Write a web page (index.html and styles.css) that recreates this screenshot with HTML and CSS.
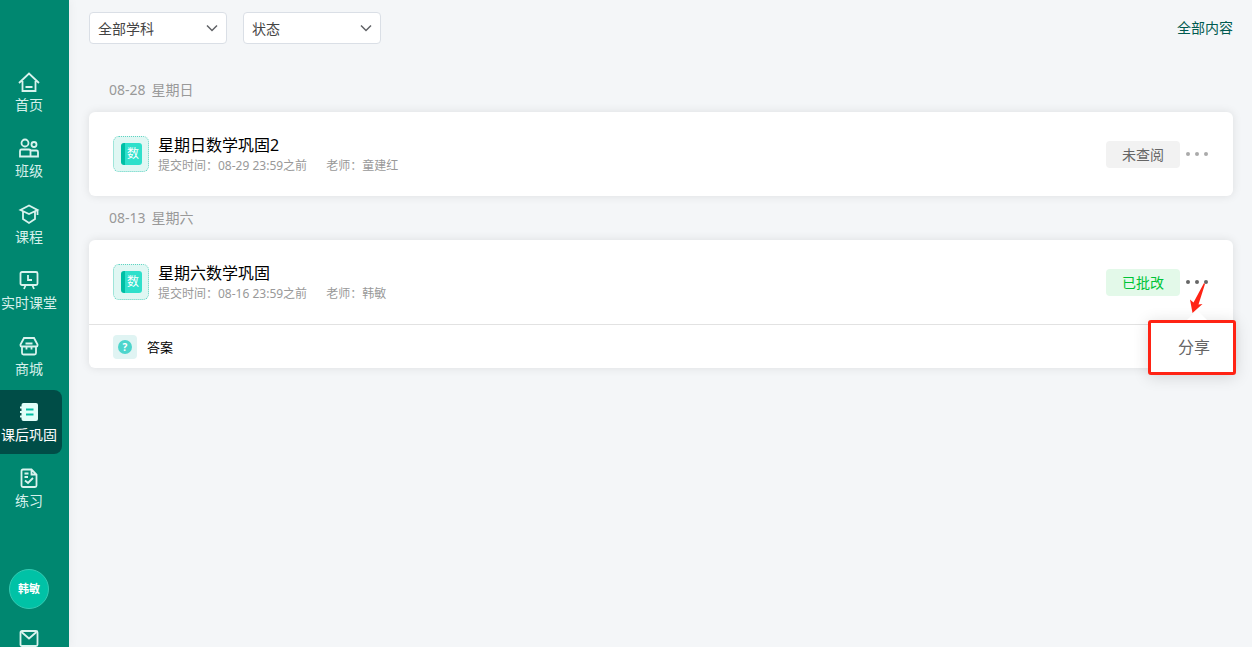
FILE: index.html
```html
<!DOCTYPE html>
<html lang="zh-CN">
<head>
    <meta charset="UTF-8">
    <meta name="viewport" content="width=device-width, initial-scale=1.0">
    <title>课后巩固</title>
    <link rel="stylesheet" href="styles.css">
</head>
<body>
    <aside class="sidebar">
        <nav class="menu">
            <a href="#" class="menu-item">
                <svg viewBox="0 0 22 22"><path d="M1 12 11 2.500l10 9.500M4.500 10v10h13V10M7.500 16h7"/></svg>
                <span>首页</span>
            </a>
            <a href="#" class="menu-item">
                <svg viewBox="0 0 22 22"><circle cx="7" cy="6" r="3.500"/><circle cx="16" cy="7.500" r="2.500"/><path d="M12.500 19.500H2V14q0-1.500 1.500-1.500H11q1.500 0 1.500 1.500zh7.500v-4.500q0-1.500-1.500-1.500h-6"/></svg>
                <span>班级</span>
            </a>
            <a href="#" class="menu-item">
                <svg viewBox="0 0 22 22"><path d="M11 2.500 2.500 7 11 11l8.500-4zM19.500 7v5M5 8.500V16l6 4 6-4V8.500"/></svg>
                <span>课程</span>
            </a>
            <a href="#" class="menu-item">
                <svg viewBox="0 0 22 22"><rect x="2.500" y="3" width="17" height="13" rx="1.500"/><path d="M10 6v5h4M7.500 16.500 6 20M14.500 16.500 16 20"/></svg>
                <span>实时课堂</span>
            </a>
            <a href="#" class="menu-item">
                <svg viewBox="0 0 22 22"><path d="M6 3h10l3.500 6.500v1q0 1-1 1h-15q-1 0-1-1v-1zM4 12v6q0 1.500 1.500 1.500h11q1.500 0 1.500-1.500v-6M7.500 8.500h7M8.500 12v2.500M13.500 12v2.500"/></svg>
                <span>商城</span>
            </a>
            <a href="#" class="menu-item active">
                <svg viewBox="0 0 22 22"><rect class="fill" x="3.500" y="2" width="16.500" height="18" rx="2"/><path class="notch" d="M2 6.500h4M2 11h4M2 15.500h4"/><path class="lines" d="M8 8.500h7.500M8 13.500h7.500"/></svg>
                <span>课后巩固</span>
            </a>
            <a href="#" class="menu-item">
                <svg viewBox="0 0 22 22"><path d="M13.500 2.500H5q-1.500 0-1.500 1.500v14.500Q3.500 20 5 20h12q1.500 0 1.500-1.500V7.500zV7.500h5M6.500 6.500h4M6.500 10H10M7 13.500l3 2.500 5-5"/></svg>
                <span>练习</span>
            </a>
        </nav>
        <button type="button" class="avatar">韩敏</button>
        <button type="button" class="mail" aria-label="消息">
            <svg viewBox="0 0 22 22"><rect x="2.500" y="4" width="17" height="15" rx="1.500"/><path d="m3.500 5 7.500 6.500L18.500 5"/></svg>
        </button>
    </aside>

    <main class="content">
        <div class="toolbar">
            <div class="select-box">
                <select aria-label="学科">
                    <option>全部学科</option>
                </select>
                <svg viewBox="0 0 12 12"><path d="m1 3.500 5 5 5-5"/></svg>
            </div>
            <div class="select-box">
                <select aria-label="状态">
                    <option>状态</option>
                </select>
                <svg viewBox="0 0 12 12"><path d="m1 3.500 5 5 5-5"/></svg>
            </div>
            <a href="#" class="all-link">全部内容</a>
        </div>

        <section>
            <h2 class="date"><span>08-28</span> <span>星期日</span></h2>
            <div class="card">
                <div class="card-row">
                    <div class="subject"><span>数</span></div>
                    <div class="info">
                        <h3>星期日数学巩固2</h3>
                        <p><span>提交时间：08-29 23:59之前</span><span>老师：童建红</span></p>
                    </div>
                    <button type="button" class="status">未查阅</button>
                    <div class="more">
                        <button type="button" class="dots" aria-label="更多"><i></i><i></i><i></i></button>
                    </div>
                </div>
            </div>
        </section>

        <section>
            <h2 class="date"><span>08-13</span> <span>星期六</span></h2>
            <div class="card">
                <div class="card-row">
                    <div class="subject"><span>数</span></div>
                    <div class="info">
                        <h3>星期六数学巩固</h3>
                        <p><span>提交时间：08-16 23:59之前</span><span>老师：韩敏</span></p>
                    </div>
                    <button type="button" class="status done">已批改</button>
                    <div class="more">
                        <button type="button" class="dots open" aria-label="更多"><i></i><i></i><i></i></button>
                        <div class="popover">
                            <button type="button">分享</button>
                        </div>
                        <svg class="pointer" viewBox="0 0 18 32"><path d="M16 1 17 2 10.500 22.500 14.500 22 4.500 31 2 17.500 5.500 20.500z"/></svg>
                    </div>
                </div>
                <a href="#" class="answer">
                    <span class="answer-icon"><b>?</b></span>
                    <span>答案</span>
                </a>
            </div>
        </section>
    </main>
</body>
</html>
```
FILE: styles.css
```css
* {
    box-sizing: border-box;
}
body {
    margin: 0;
    display: flex;
    height: 100vh;
    overflow: hidden;
    background: #f4f6f8;
    color: #000;
    font-family: "Noto Sans", "Noto Sans CJK SC", sans-serif;
    font-size: 14px;
}
a {
    color: inherit;
    text-decoration: none;
}
button, select {
    font-family: inherit;
    font-size: 14px;
    border: none;
    cursor: pointer;
}
h2, h3, p {
    margin: 0;
    font-weight: 400;
}

/* sidebar */
.sidebar {
    flex: none;
    width: 69px;
    padding-top: 60px;
    background: #008770;
    box-shadow: 0 0 10px rgba(0, 0, 0, 0.06);
}
.menu {
    display: flex;
    flex-direction: column;
    gap: 2px;
}
.menu-item {
    display: flex;
    flex-direction: column;
    align-items: center;
    width: 62px;
    height: 64px;
    padding: 11px 4px 0 0;
    border-radius: 0 8px 8px 0;
    color: #d6f0eb;
    line-height: 20px;
    white-space: nowrap;
}
.menu-item svg, .mail svg {
    display: block;
    width: 22px;
    height: 22px;
    margin-bottom: 2px;
    fill: none;
    stroke: #d9f3ee;
    stroke-width: 1.8;
}
.menu-item.active {
    background: #004d47;
    color: #fff;
}
.menu-item .fill {
    fill: #e0fff9;
    stroke: none;
}
.menu-item .notch {
    stroke: #e0fff9;
    stroke-width: 2;
}
.menu-item .lines {
    stroke: #00bfa3;
    stroke-width: 2;
}
.avatar {
    display: block;
    width: 40px;
    height: 40px;
    margin: 49px 0 0 9px;
    padding: 0 0 2px;
    border: 1px solid #33cbb3;
    border-radius: 50%;
    background: #00c2a6;
    color: #fff;
    font-size: 11px;
    font-weight: 700;
}
.mail {
    display: block;
    margin: 18px 0 0 18px;
    padding: 0;
    background: none;
}

/* content */
.content {
    flex: 1;
    min-width: 0;
    padding: 12px 19px 0 20px;
}
.toolbar {
    display: flex;
    align-items: center;
    gap: 16px;
    margin-bottom: 24px;
}
.select-box {
    position: relative;
    width: 138px;
}
.select-box select {
    display: block;
    width: 100%;
    height: 32px;
    padding: 0 28px 0 8px;
    border: 1px solid #dadfe6;
    border-radius: 4px;
    background: #fff;
    color: #444;
    appearance: none;
}
.select-box svg {
    position: absolute;
    top: 10px;
    right: 9px;
    width: 12px;
    height: 12px;
    fill: none;
    stroke: #606266;
    stroke-width: 1.5;
    pointer-events: none;
}
.all-link {
    margin-left: auto;
    padding-bottom: 2px;
    color: #005a50;
}
.date {
    display: flex;
    gap: 6px;
    padding-left: 20px;
    color: #999;
    font-size: 14px;
    line-height: 44px;
}
.card {
    border-radius: 6px;
    background: #fff;
    box-shadow: 0 0 10px rgba(0, 0, 0, 0.1);
}
.card-row {
    display: flex;
    align-items: center;
    height: 84px;
    padding: 0 25px 0 24px;
}
.subject {
    display: flex;
    align-items: center;
    justify-content: center;
    width: 36px;
    height: 36px;
    border: 1px dotted #5fd3c2;
    border-radius: 6px;
    background: #e0f7f3;
}
.subject span {
    width: 21px;
    height: 22px;
    border-left: 4px solid #00bfa5;
    border-radius: 3px;
    background: #2ee0cb;
    color: #fff;
    font-size: 12px;
    line-height: 22px;
    text-align: center;
}
.info {
    flex: 1;
    margin-left: 9px;
    padding-top: 1px;
}
.info h3 {
    font-size: 16px;
    line-height: 22px;
}
.info p {
    display: flex;
    gap: 19px;
    color: #999;
    font-size: 12px;
    line-height: 20px;
}
.status {
    width: 74px;
    height: 27px;
    padding: 0;
    border-radius: 4px;
    background: #f2f2f2;
    color: #666;
}
.status.done {
    background: #e3f9e9;
    color: #00c437;
}
.more {
    position: relative;
    margin-left: 6px;
}
.dots {
    display: flex;
    gap: 5px;
    padding: 8px 0;
    background: none;
}
.dots i {
    width: 4px;
    height: 4px;
    border-radius: 50%;
    background: #aaa;
}
.dots.open i {
    background: #666;
}
.popover {
    position: absolute;
    top: 48px;
    right: -28px;
    width: 88px;
    border: 3px solid #ff2314;
    border-radius: 3px;
    background: #fff;
    box-shadow: 0 2px 16px rgba(0, 0, 0, 0.14);
}
.popover::before {
    content: "";
    position: absolute;
    top: -13px;
    left: 36px;
    border: 10px solid transparent;
    border-top: none;
    border-bottom-color: #fff;
}
.popover button {
    display: block;
    width: 100%;
    height: 49px;
    padding: 0 0 4px 4px;
    background: none;
    color: #666;
    font-size: 16px;
}
.pointer {
    position: absolute;
    top: 10px;
    left: 2px;
    width: 18px;
    height: 32px;
    fill: #ff2314;
    pointer-events: none;
}
.answer {
    display: flex;
    align-items: center;
    gap: 10px;
    height: 44px;
    padding: 0 24px;
    border-top: 1px solid #e2e2e2;
    font-size: 13px;
}
.answer-icon {
    display: flex;
    align-items: center;
    justify-content: center;
    width: 24px;
    height: 24px;
    border-radius: 4px;
    background: #e0f4f3;
}
.answer-icon b {
    width: 14px;
    height: 14px;
    border-radius: 50%;
    background: #4dd5cc;
    color: #fff;
    font-size: 10px;
    line-height: 14px;
    text-align: center;
}
```
